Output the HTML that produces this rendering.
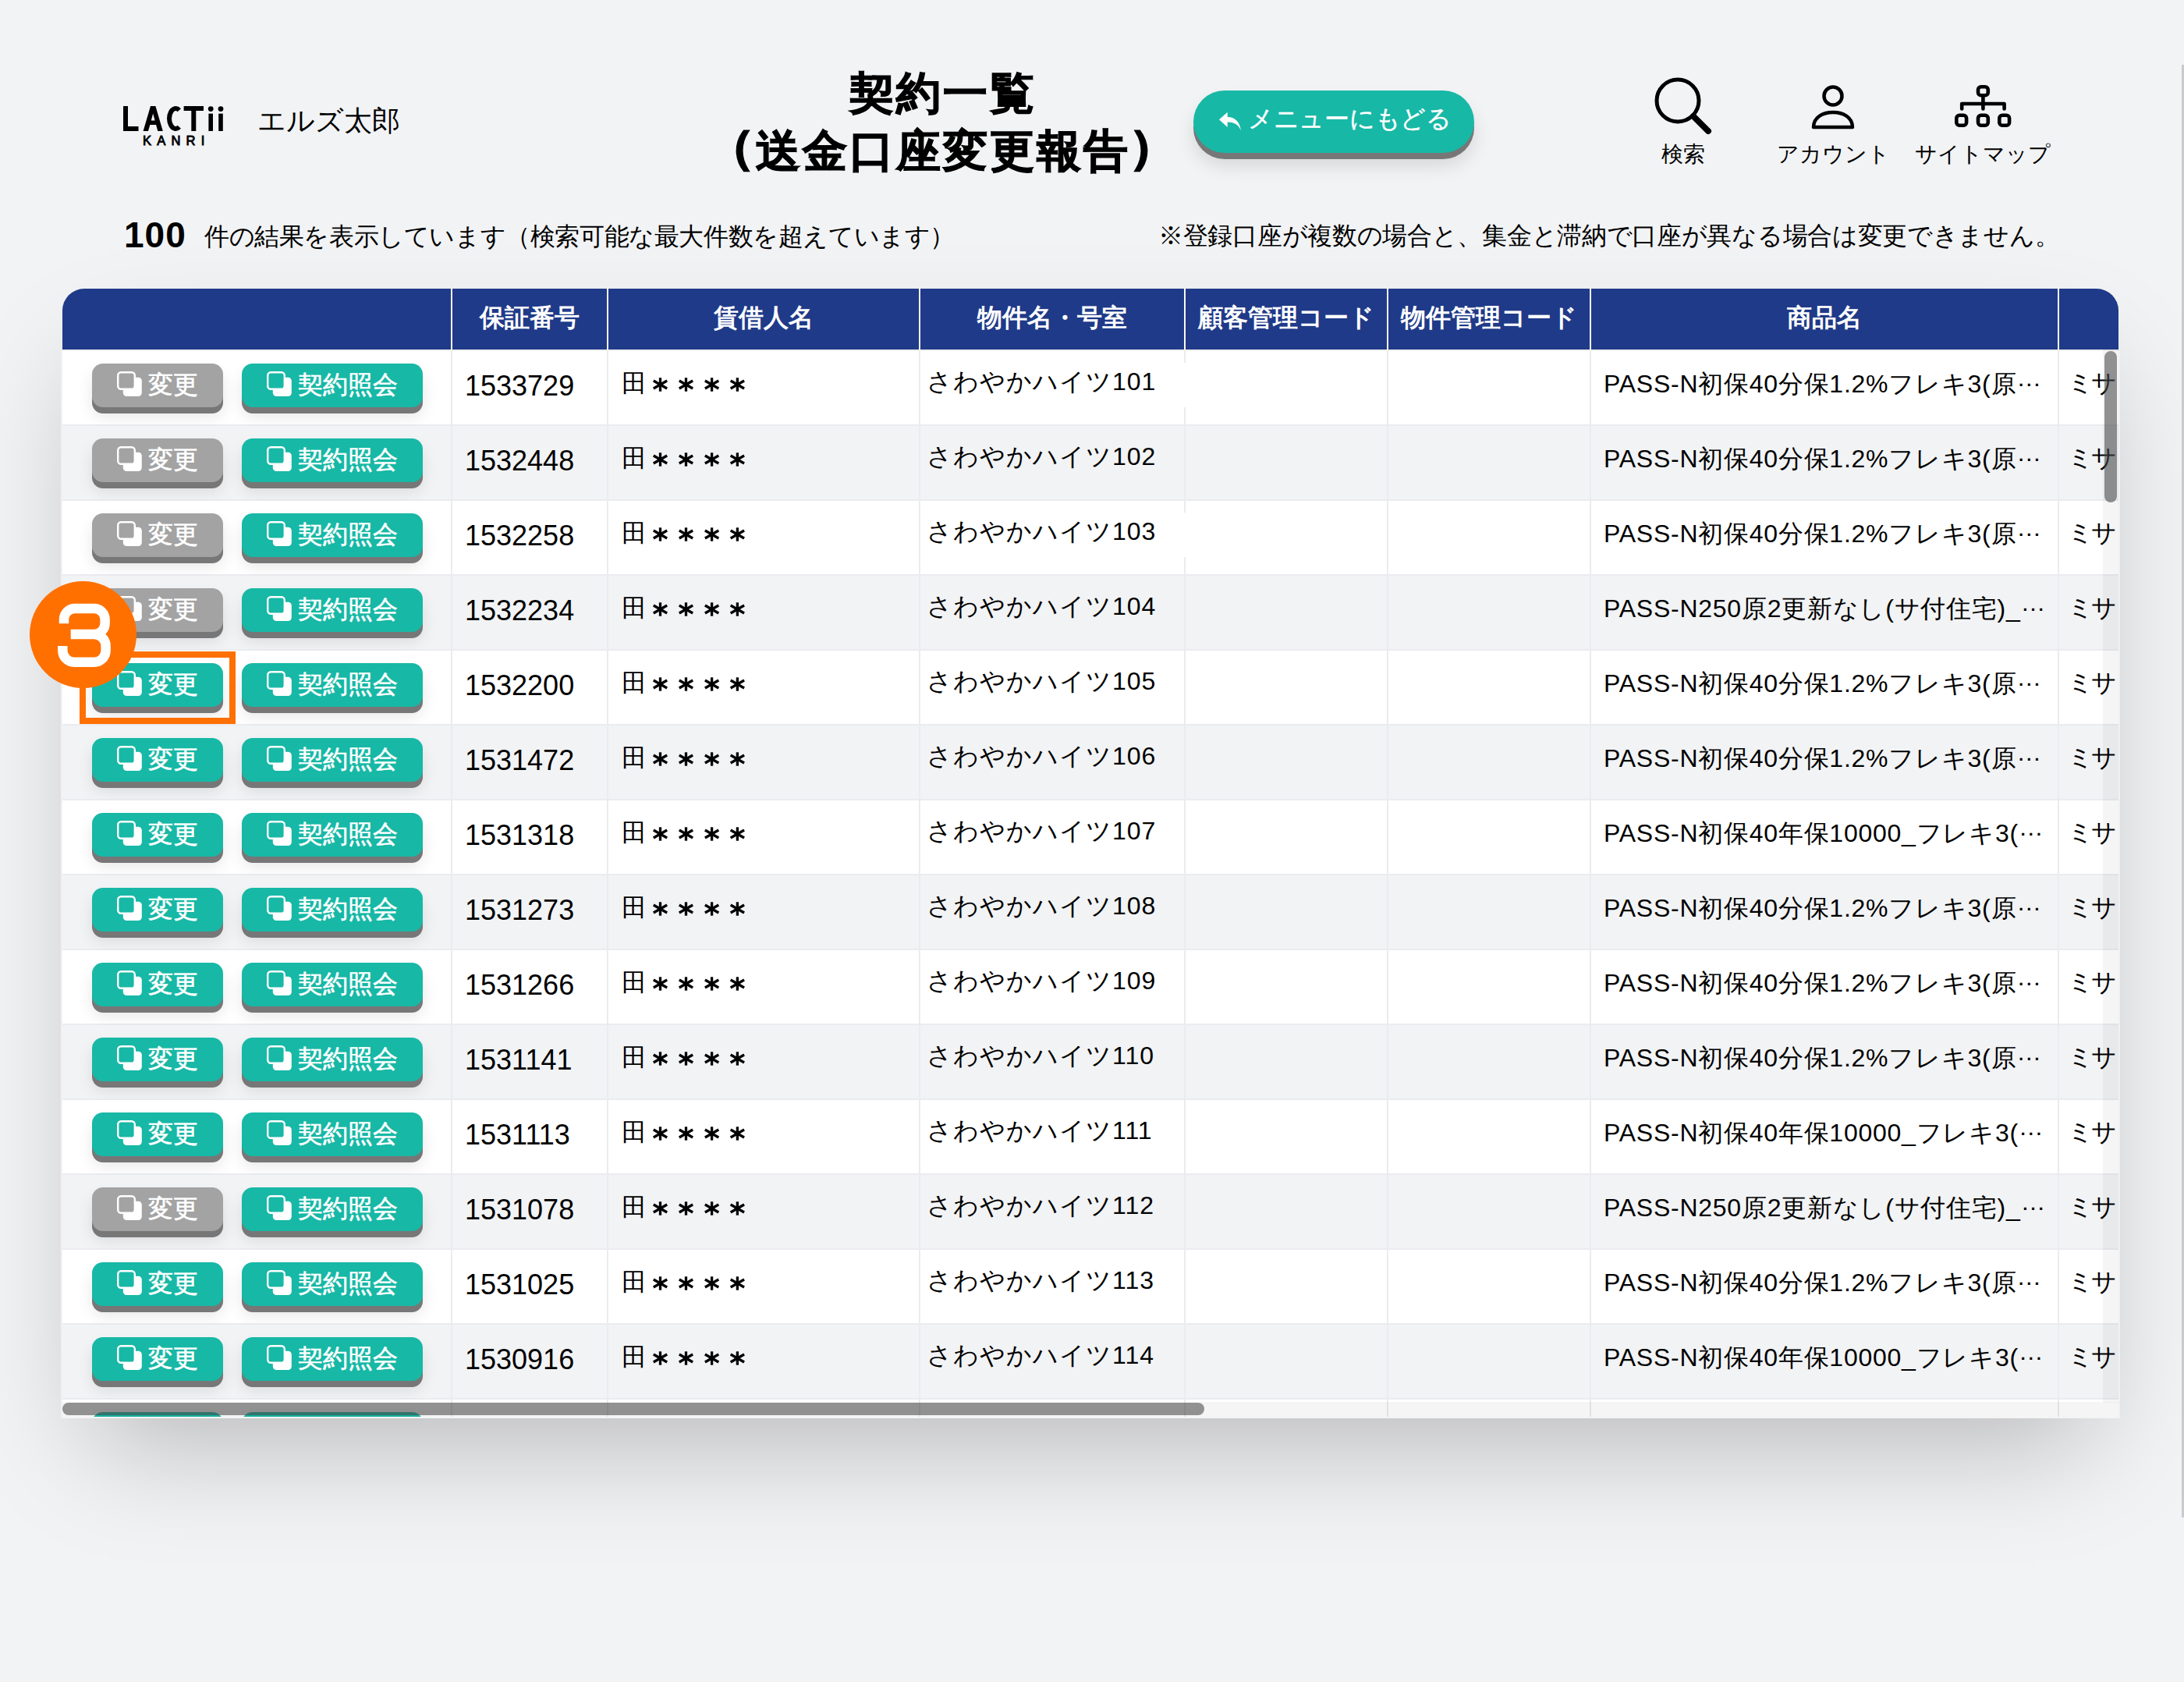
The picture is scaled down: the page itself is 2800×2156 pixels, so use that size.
<!DOCTYPE html>
<html><head><meta charset="utf-8">
<style>
html,body{margin:0;padding:0}
body{width:2800px;height:2156px;overflow:hidden;position:relative;background:#f2f3f5;font-family:"Liberation Sans",sans-serif;color:#000}
.abs{position:absolute;white-space:nowrap}
.logo{left:156px;top:124px;font-size:45px;font-weight:bold;letter-spacing:3px;line-height:52px}
.kanri{left:183px;top:170.5px;font-size:16.5px;font-weight:normal;-webkit-text-stroke:0.9px #000;letter-spacing:7.2px;line-height:18px}
.user{left:330px;top:133px;font-size:36px;line-height:44px}
.title{left:900px;width:617px;top:82px;text-align:center;font-size:57px;font-weight:bold;line-height:74px;letter-spacing:3px;-webkit-text-stroke:1.2px #000}
.title b{-webkit-text-stroke:3px #000;position:relative;top:-5px}
.menu{left:1530px;top:116px;width:360px;height:80px;border-radius:40px;background:#17b8a6;box-shadow:0 8px 0 #777,0 16px 24px rgba(0,0,0,.12)}
.menu span{position:absolute;left:70px;top:16px;font-size:32px;line-height:40px;color:#fff;letter-spacing:-0.3px;-webkit-text-stroke:0.4px #fff}
.menu svg{position:absolute;left:33px;top:27px}
.nav{top:180px;font-size:28px;line-height:36px;text-align:center;width:200px}
.count{left:159px;top:275px;font-size:46px;font-weight:bold;line-height:52px;letter-spacing:1px}
.countt{left:262px;top:283px;font-size:32px;line-height:40px;letter-spacing:-0.4px}
.note{left:1485px;top:282px;font-size:32px;line-height:40px;letter-spacing:-0.3px}
.tbl{left:80px;top:370px;width:2636px;height:1448px;border-radius:28px 28px 0 0;overflow:hidden;background:#f4f4f4;box-shadow:0 66px 140px -37px rgba(0,0,0,.25)}
.hd{position:absolute;left:0;top:0;width:2636px;height:78px;background:#1f3a88}
.hd .dv{position:absolute;top:0;width:2px;height:78px;background:#faf8f2}
.hl{position:absolute;left:0;top:78px;width:2636px;height:2px;background:#efefef}
.hd .h{position:absolute;top:17px;height:40px;line-height:40px;font-size:32px;font-weight:bold;color:#fff;text-align:center}
.row{position:absolute;left:0;width:2636px;height:96px;border-bottom:2px solid #ebecef;box-sizing:border-box}
.row .vd{position:absolute;top:0;width:2px;height:96px;background:#ebecef}
.btn{position:absolute;top:16px;height:56px;border-radius:14px;box-shadow:0 8px 0 #777,0 12px 20px rgba(0,0,0,.10)}
.btn.t{background:#17b8a6}
.btn.g{background:#a3a3a3}
.btn.b1{left:38px;width:168px}
.btn.b2{left:230px;width:232px}
.btn.b2{background:#17b8a6}
.btn .ic{position:absolute;left:32px;top:10px}
.btn span{position:absolute;left:72px;top:7px;font-size:32px;line-height:40px;font-weight:normal;-webkit-text-stroke:0.6px #fff;color:#fff}
.c{position:absolute;top:26px;line-height:40px;font-size:32px;white-space:nowrap}
.num{left:516px;font-size:36px;top:25px}
.nm{left:717px;top:21px}
.bk{left:1108px;top:19px;letter-spacing:1px}
.pr{left:1976px;font-size:32px;top:22px;letter-spacing:0.75px}
.pr i{font-style:normal;position:relative;top:-8px}
.ms{left:2571px;top:21px;letter-spacing:-3px}
.ast{position:absolute;left:756px;top:31px}
.vtrack{position:absolute;left:2616px;top:78px;width:20px;height:1350px;background:rgba(0,0,0,.04)}
.vthumb{position:absolute;left:2618px;top:80px;width:16px;height:194px;border-radius:8px;background:rgba(72,72,72,.58)}
.htrack{position:absolute;left:0;top:1427px;width:2636px;height:21px;background:rgba(0,0,0,.04)}
.hthumb{position:absolute;left:0;top:1428px;width:1464px;height:16px;border-radius:8px;background:rgba(72,72,72,.58)}
.pline{left:2797px;top:83px;width:3px;height:1862px;background:#c9cacd}
.badge{left:38px;top:745px;width:137px;height:137px;border-radius:50%;background:#ff7000}
.rect{left:102px;top:835px;width:184px;height:77px;border:8px solid #ff7000}
</style></head><body>
<svg class="abs" style="left:150px;top:128px" width="150" height="48" viewBox="150 128 150 48">
<path d="M158 136 H164 V162 H177.5 V168 H158 Z"/>
<path fill-rule="evenodd" d="M183.6 168 L193 136 H199.4 L208.8 168 H202.3 L200.1 160 H192.3 L190 168 Z M193.8 154.5 H198.6 L196.2 145.5 Z"/>
<path d="M229.8 141.2 A8.2 13 0 1 0 229.8 162.8" fill="none" stroke="#000" stroke-width="6"/>
<path d="M235.6 136 H261 V142 H251.3 V168 H245.3 V142 H235.6 Z"/>
<rect x="267.4" y="145.6" width="5.6" height="22.4"/><rect x="280.2" y="145.6" width="5.6" height="22.4"/>
<circle cx="270.2" cy="139.6" r="3.4"/><circle cx="283" cy="139.6" r="3.4"/>
</svg>
<div class="abs kanri">KANRI</div>
<div class="abs user">エルズ太郎</div>
<div class="abs title">契約一覧<br><b>（</b>送金口座変更報告<b>）</b></div>
<div class="abs menu"><svg width="30" height="27" viewBox="0 0 28 24"><path d="M10 0 L0 9 L10 18 L10 12 C18 12 23 15 26 22 C25 13 20 6 10 6 Z" fill="#fff"/></svg><span>メニューにもどる</span></div>
<svg class="abs" style="left:2118px;top:96px" width="80" height="80" viewBox="0 0 80 80"><circle cx="33" cy="33" r="27" fill="none" stroke="#000" stroke-width="5"/><line x1="53" y1="53" x2="72" y2="72" stroke="#000" stroke-width="8" stroke-linecap="round"/></svg>
<svg class="abs" style="left:2318px;top:106px" width="64" height="64" viewBox="0 0 64 64"><circle cx="32" cy="17" r="11.5" fill="none" stroke="#000" stroke-width="4.5"/><path d="M7 57 C7 45 18 38 32 38 C46 38 57 45 57 57 Z" fill="none" stroke="#000" stroke-width="4.5" stroke-linejoin="round"/></svg>
<svg class="abs" style="left:2500px;top:104px" width="84" height="64" viewBox="2500 104 84 64"><g fill="none" stroke="#000" stroke-width="4.6"><rect x="2536" y="111.3" width="12.8" height="11" rx="3.8"/><path d="M2515.2 139.5 V133 H2569.6 V139.5 M2542.4 123 V139.5" stroke-linecap="round" stroke-linejoin="round"/><rect x="2508.3" y="147.7" width="12.8" height="13" rx="3.8"/><rect x="2536" y="147.7" width="12.8" height="13" rx="3.8"/><rect x="2563.3" y="147.7" width="12.8" height="13" rx="3.8"/></g></svg>
<div class="abs nav" style="left:2058px">検索</div>
<div class="abs nav" style="left:2250px">アカウント</div>
<div class="abs nav" style="left:2442px">サイトマップ</div>
<div class="abs count">100</div>
<div class="abs countt">件の結果を表示しています（検索可能な最大件数を超えています）</div>
<div class="abs note">※登録口座が複数の場合と、集金と滞納で口座が異なる場合は変更できません。</div>
<div class="abs tbl">
<div class="row" style="top:80px;background:#ffffff"><div class="btn b1 g"><svg class="ic" width="40" height="40" viewBox="0 0 40 40"><rect x="7.8" y="7.8" width="24" height="24.2" rx="4.5" fill="#fff"/><rect x="1.2" y="1.2" width="21.6" height="21.6" rx="4" fill="#a3a3a3" stroke="#fff" stroke-width="2.4"/></svg><span>変更</span></div><div class="btn b2 t"><svg class="ic" width="40" height="40" viewBox="0 0 40 40"><rect x="7.8" y="7.8" width="24" height="24.2" rx="4.5" fill="#fff"/><rect x="1.2" y="1.2" width="21.6" height="21.6" rx="4" fill="#17b8a6" stroke="#fff" stroke-width="2.4"/></svg><span>契約照会</span></div><div class="vd" style="left:498px"></div><div class="vd" style="left:698px"></div><div class="vd" style="left:1098px"></div><div class="vd" style="left:1438px"></div><div class="vd" style="left:1698px"></div><div class="vd" style="left:1958px"></div><div class="vd" style="left:2558px"></div><div class="c num">1533729</div><div class="c nm">田</div><svg class="ast" width="130" height="24" viewBox="0 0 130 24"><g transform="translate(10.5,12)" stroke="#000" stroke-width="3.3"><line x1="0" y1="-8.7" x2="0" y2="8.7"/><line x1="-8.7" y1="-5" x2="8.7" y2="5"/><line x1="-8.7" y1="5" x2="8.7" y2="-5"/></g><g transform="translate(43.5,12)" stroke="#000" stroke-width="3.3"><line x1="0" y1="-8.7" x2="0" y2="8.7"/><line x1="-8.7" y1="-5" x2="8.7" y2="5"/><line x1="-8.7" y1="5" x2="8.7" y2="-5"/></g><g transform="translate(76.6,12)" stroke="#000" stroke-width="3.3"><line x1="0" y1="-8.7" x2="0" y2="8.7"/><line x1="-8.7" y1="-5" x2="8.7" y2="5"/><line x1="-8.7" y1="5" x2="8.7" y2="-5"/></g><g transform="translate(109.4,12)" stroke="#000" stroke-width="3.3"><line x1="0" y1="-8.7" x2="0" y2="8.7"/><line x1="-8.7" y1="-5" x2="8.7" y2="5"/><line x1="-8.7" y1="5" x2="8.7" y2="-5"/></g></svg><div class="c bk">さわやかハイツ101</div><div class="c pr">PASS-N初保40分保1.2%フレキ3(原<i>…</i></div><div class="c ms">ミサ</div><div style="position:absolute;left:1438px;top:15px;width:2px;height:57px;background:#fff"></div></div><div class="row" style="top:176px;background:#f2f3f5"><div class="btn b1 g"><svg class="ic" width="40" height="40" viewBox="0 0 40 40"><rect x="7.8" y="7.8" width="24" height="24.2" rx="4.5" fill="#fff"/><rect x="1.2" y="1.2" width="21.6" height="21.6" rx="4" fill="#a3a3a3" stroke="#fff" stroke-width="2.4"/></svg><span>変更</span></div><div class="btn b2 t"><svg class="ic" width="40" height="40" viewBox="0 0 40 40"><rect x="7.8" y="7.8" width="24" height="24.2" rx="4.5" fill="#fff"/><rect x="1.2" y="1.2" width="21.6" height="21.6" rx="4" fill="#17b8a6" stroke="#fff" stroke-width="2.4"/></svg><span>契約照会</span></div><div class="vd" style="left:498px"></div><div class="vd" style="left:698px"></div><div class="vd" style="left:1098px"></div><div class="vd" style="left:1438px"></div><div class="vd" style="left:1698px"></div><div class="vd" style="left:1958px"></div><div class="vd" style="left:2558px"></div><div class="c num">1532448</div><div class="c nm">田</div><svg class="ast" width="130" height="24" viewBox="0 0 130 24"><g transform="translate(10.5,12)" stroke="#000" stroke-width="3.3"><line x1="0" y1="-8.7" x2="0" y2="8.7"/><line x1="-8.7" y1="-5" x2="8.7" y2="5"/><line x1="-8.7" y1="5" x2="8.7" y2="-5"/></g><g transform="translate(43.5,12)" stroke="#000" stroke-width="3.3"><line x1="0" y1="-8.7" x2="0" y2="8.7"/><line x1="-8.7" y1="-5" x2="8.7" y2="5"/><line x1="-8.7" y1="5" x2="8.7" y2="-5"/></g><g transform="translate(76.6,12)" stroke="#000" stroke-width="3.3"><line x1="0" y1="-8.7" x2="0" y2="8.7"/><line x1="-8.7" y1="-5" x2="8.7" y2="5"/><line x1="-8.7" y1="5" x2="8.7" y2="-5"/></g><g transform="translate(109.4,12)" stroke="#000" stroke-width="3.3"><line x1="0" y1="-8.7" x2="0" y2="8.7"/><line x1="-8.7" y1="-5" x2="8.7" y2="5"/><line x1="-8.7" y1="5" x2="8.7" y2="-5"/></g></svg><div class="c bk">さわやかハイツ102</div><div class="c pr">PASS-N初保40分保1.2%フレキ3(原<i>…</i></div><div class="c ms">ミサ</div></div><div class="row" style="top:272px;background:#ffffff"><div class="btn b1 g"><svg class="ic" width="40" height="40" viewBox="0 0 40 40"><rect x="7.8" y="7.8" width="24" height="24.2" rx="4.5" fill="#fff"/><rect x="1.2" y="1.2" width="21.6" height="21.6" rx="4" fill="#a3a3a3" stroke="#fff" stroke-width="2.4"/></svg><span>変更</span></div><div class="btn b2 t"><svg class="ic" width="40" height="40" viewBox="0 0 40 40"><rect x="7.8" y="7.8" width="24" height="24.2" rx="4.5" fill="#fff"/><rect x="1.2" y="1.2" width="21.6" height="21.6" rx="4" fill="#17b8a6" stroke="#fff" stroke-width="2.4"/></svg><span>契約照会</span></div><div class="vd" style="left:498px"></div><div class="vd" style="left:698px"></div><div class="vd" style="left:1098px"></div><div class="vd" style="left:1438px"></div><div class="vd" style="left:1698px"></div><div class="vd" style="left:1958px"></div><div class="vd" style="left:2558px"></div><div class="c num">1532258</div><div class="c nm">田</div><svg class="ast" width="130" height="24" viewBox="0 0 130 24"><g transform="translate(10.5,12)" stroke="#000" stroke-width="3.3"><line x1="0" y1="-8.7" x2="0" y2="8.7"/><line x1="-8.7" y1="-5" x2="8.7" y2="5"/><line x1="-8.7" y1="5" x2="8.7" y2="-5"/></g><g transform="translate(43.5,12)" stroke="#000" stroke-width="3.3"><line x1="0" y1="-8.7" x2="0" y2="8.7"/><line x1="-8.7" y1="-5" x2="8.7" y2="5"/><line x1="-8.7" y1="5" x2="8.7" y2="-5"/></g><g transform="translate(76.6,12)" stroke="#000" stroke-width="3.3"><line x1="0" y1="-8.7" x2="0" y2="8.7"/><line x1="-8.7" y1="-5" x2="8.7" y2="5"/><line x1="-8.7" y1="5" x2="8.7" y2="-5"/></g><g transform="translate(109.4,12)" stroke="#000" stroke-width="3.3"><line x1="0" y1="-8.7" x2="0" y2="8.7"/><line x1="-8.7" y1="-5" x2="8.7" y2="5"/><line x1="-8.7" y1="5" x2="8.7" y2="-5"/></g></svg><div class="c bk">さわやかハイツ103</div><div class="c pr">PASS-N初保40分保1.2%フレキ3(原<i>…</i></div><div class="c ms">ミサ</div><div style="position:absolute;left:1438px;top:15px;width:2px;height:57px;background:#fff"></div></div><div class="row" style="top:368px;background:#f2f3f5"><div class="btn b1 g"><svg class="ic" width="40" height="40" viewBox="0 0 40 40"><rect x="7.8" y="7.8" width="24" height="24.2" rx="4.5" fill="#fff"/><rect x="1.2" y="1.2" width="21.6" height="21.6" rx="4" fill="#a3a3a3" stroke="#fff" stroke-width="2.4"/></svg><span>変更</span></div><div class="btn b2 t"><svg class="ic" width="40" height="40" viewBox="0 0 40 40"><rect x="7.8" y="7.8" width="24" height="24.2" rx="4.5" fill="#fff"/><rect x="1.2" y="1.2" width="21.6" height="21.6" rx="4" fill="#17b8a6" stroke="#fff" stroke-width="2.4"/></svg><span>契約照会</span></div><div class="vd" style="left:498px"></div><div class="vd" style="left:698px"></div><div class="vd" style="left:1098px"></div><div class="vd" style="left:1438px"></div><div class="vd" style="left:1698px"></div><div class="vd" style="left:1958px"></div><div class="vd" style="left:2558px"></div><div class="c num">1532234</div><div class="c nm">田</div><svg class="ast" width="130" height="24" viewBox="0 0 130 24"><g transform="translate(10.5,12)" stroke="#000" stroke-width="3.3"><line x1="0" y1="-8.7" x2="0" y2="8.7"/><line x1="-8.7" y1="-5" x2="8.7" y2="5"/><line x1="-8.7" y1="5" x2="8.7" y2="-5"/></g><g transform="translate(43.5,12)" stroke="#000" stroke-width="3.3"><line x1="0" y1="-8.7" x2="0" y2="8.7"/><line x1="-8.7" y1="-5" x2="8.7" y2="5"/><line x1="-8.7" y1="5" x2="8.7" y2="-5"/></g><g transform="translate(76.6,12)" stroke="#000" stroke-width="3.3"><line x1="0" y1="-8.7" x2="0" y2="8.7"/><line x1="-8.7" y1="-5" x2="8.7" y2="5"/><line x1="-8.7" y1="5" x2="8.7" y2="-5"/></g><g transform="translate(109.4,12)" stroke="#000" stroke-width="3.3"><line x1="0" y1="-8.7" x2="0" y2="8.7"/><line x1="-8.7" y1="-5" x2="8.7" y2="5"/><line x1="-8.7" y1="5" x2="8.7" y2="-5"/></g></svg><div class="c bk">さわやかハイツ104</div><div class="c pr">PASS-N250原2更新なし(サ付住宅)_<i>…</i></div><div class="c ms">ミサ</div></div><div class="row" style="top:464px;background:#ffffff"><div class="btn b1 t"><svg class="ic" width="40" height="40" viewBox="0 0 40 40"><rect x="7.8" y="7.8" width="24" height="24.2" rx="4.5" fill="#fff"/><rect x="1.2" y="1.2" width="21.6" height="21.6" rx="4" fill="#17b8a6" stroke="#fff" stroke-width="2.4"/></svg><span>変更</span></div><div class="btn b2 t"><svg class="ic" width="40" height="40" viewBox="0 0 40 40"><rect x="7.8" y="7.8" width="24" height="24.2" rx="4.5" fill="#fff"/><rect x="1.2" y="1.2" width="21.6" height="21.6" rx="4" fill="#17b8a6" stroke="#fff" stroke-width="2.4"/></svg><span>契約照会</span></div><div class="vd" style="left:498px"></div><div class="vd" style="left:698px"></div><div class="vd" style="left:1098px"></div><div class="vd" style="left:1438px"></div><div class="vd" style="left:1698px"></div><div class="vd" style="left:1958px"></div><div class="vd" style="left:2558px"></div><div class="c num">1532200</div><div class="c nm">田</div><svg class="ast" width="130" height="24" viewBox="0 0 130 24"><g transform="translate(10.5,12)" stroke="#000" stroke-width="3.3"><line x1="0" y1="-8.7" x2="0" y2="8.7"/><line x1="-8.7" y1="-5" x2="8.7" y2="5"/><line x1="-8.7" y1="5" x2="8.7" y2="-5"/></g><g transform="translate(43.5,12)" stroke="#000" stroke-width="3.3"><line x1="0" y1="-8.7" x2="0" y2="8.7"/><line x1="-8.7" y1="-5" x2="8.7" y2="5"/><line x1="-8.7" y1="5" x2="8.7" y2="-5"/></g><g transform="translate(76.6,12)" stroke="#000" stroke-width="3.3"><line x1="0" y1="-8.7" x2="0" y2="8.7"/><line x1="-8.7" y1="-5" x2="8.7" y2="5"/><line x1="-8.7" y1="5" x2="8.7" y2="-5"/></g><g transform="translate(109.4,12)" stroke="#000" stroke-width="3.3"><line x1="0" y1="-8.7" x2="0" y2="8.7"/><line x1="-8.7" y1="-5" x2="8.7" y2="5"/><line x1="-8.7" y1="5" x2="8.7" y2="-5"/></g></svg><div class="c bk">さわやかハイツ105</div><div class="c pr">PASS-N初保40分保1.2%フレキ3(原<i>…</i></div><div class="c ms">ミサ</div></div><div class="row" style="top:560px;background:#f2f3f5"><div class="btn b1 t"><svg class="ic" width="40" height="40" viewBox="0 0 40 40"><rect x="7.8" y="7.8" width="24" height="24.2" rx="4.5" fill="#fff"/><rect x="1.2" y="1.2" width="21.6" height="21.6" rx="4" fill="#17b8a6" stroke="#fff" stroke-width="2.4"/></svg><span>変更</span></div><div class="btn b2 t"><svg class="ic" width="40" height="40" viewBox="0 0 40 40"><rect x="7.8" y="7.8" width="24" height="24.2" rx="4.5" fill="#fff"/><rect x="1.2" y="1.2" width="21.6" height="21.6" rx="4" fill="#17b8a6" stroke="#fff" stroke-width="2.4"/></svg><span>契約照会</span></div><div class="vd" style="left:498px"></div><div class="vd" style="left:698px"></div><div class="vd" style="left:1098px"></div><div class="vd" style="left:1438px"></div><div class="vd" style="left:1698px"></div><div class="vd" style="left:1958px"></div><div class="vd" style="left:2558px"></div><div class="c num">1531472</div><div class="c nm">田</div><svg class="ast" width="130" height="24" viewBox="0 0 130 24"><g transform="translate(10.5,12)" stroke="#000" stroke-width="3.3"><line x1="0" y1="-8.7" x2="0" y2="8.7"/><line x1="-8.7" y1="-5" x2="8.7" y2="5"/><line x1="-8.7" y1="5" x2="8.7" y2="-5"/></g><g transform="translate(43.5,12)" stroke="#000" stroke-width="3.3"><line x1="0" y1="-8.7" x2="0" y2="8.7"/><line x1="-8.7" y1="-5" x2="8.7" y2="5"/><line x1="-8.7" y1="5" x2="8.7" y2="-5"/></g><g transform="translate(76.6,12)" stroke="#000" stroke-width="3.3"><line x1="0" y1="-8.7" x2="0" y2="8.7"/><line x1="-8.7" y1="-5" x2="8.7" y2="5"/><line x1="-8.7" y1="5" x2="8.7" y2="-5"/></g><g transform="translate(109.4,12)" stroke="#000" stroke-width="3.3"><line x1="0" y1="-8.7" x2="0" y2="8.7"/><line x1="-8.7" y1="-5" x2="8.7" y2="5"/><line x1="-8.7" y1="5" x2="8.7" y2="-5"/></g></svg><div class="c bk">さわやかハイツ106</div><div class="c pr">PASS-N初保40分保1.2%フレキ3(原<i>…</i></div><div class="c ms">ミサ</div></div><div class="row" style="top:656px;background:#ffffff"><div class="btn b1 t"><svg class="ic" width="40" height="40" viewBox="0 0 40 40"><rect x="7.8" y="7.8" width="24" height="24.2" rx="4.5" fill="#fff"/><rect x="1.2" y="1.2" width="21.6" height="21.6" rx="4" fill="#17b8a6" stroke="#fff" stroke-width="2.4"/></svg><span>変更</span></div><div class="btn b2 t"><svg class="ic" width="40" height="40" viewBox="0 0 40 40"><rect x="7.8" y="7.8" width="24" height="24.2" rx="4.5" fill="#fff"/><rect x="1.2" y="1.2" width="21.6" height="21.6" rx="4" fill="#17b8a6" stroke="#fff" stroke-width="2.4"/></svg><span>契約照会</span></div><div class="vd" style="left:498px"></div><div class="vd" style="left:698px"></div><div class="vd" style="left:1098px"></div><div class="vd" style="left:1438px"></div><div class="vd" style="left:1698px"></div><div class="vd" style="left:1958px"></div><div class="vd" style="left:2558px"></div><div class="c num">1531318</div><div class="c nm">田</div><svg class="ast" width="130" height="24" viewBox="0 0 130 24"><g transform="translate(10.5,12)" stroke="#000" stroke-width="3.3"><line x1="0" y1="-8.7" x2="0" y2="8.7"/><line x1="-8.7" y1="-5" x2="8.7" y2="5"/><line x1="-8.7" y1="5" x2="8.7" y2="-5"/></g><g transform="translate(43.5,12)" stroke="#000" stroke-width="3.3"><line x1="0" y1="-8.7" x2="0" y2="8.7"/><line x1="-8.7" y1="-5" x2="8.7" y2="5"/><line x1="-8.7" y1="5" x2="8.7" y2="-5"/></g><g transform="translate(76.6,12)" stroke="#000" stroke-width="3.3"><line x1="0" y1="-8.7" x2="0" y2="8.7"/><line x1="-8.7" y1="-5" x2="8.7" y2="5"/><line x1="-8.7" y1="5" x2="8.7" y2="-5"/></g><g transform="translate(109.4,12)" stroke="#000" stroke-width="3.3"><line x1="0" y1="-8.7" x2="0" y2="8.7"/><line x1="-8.7" y1="-5" x2="8.7" y2="5"/><line x1="-8.7" y1="5" x2="8.7" y2="-5"/></g></svg><div class="c bk">さわやかハイツ107</div><div class="c pr">PASS-N初保40年保10000_フレキ3(<i>…</i></div><div class="c ms">ミサ</div></div><div class="row" style="top:752px;background:#f2f3f5"><div class="btn b1 t"><svg class="ic" width="40" height="40" viewBox="0 0 40 40"><rect x="7.8" y="7.8" width="24" height="24.2" rx="4.5" fill="#fff"/><rect x="1.2" y="1.2" width="21.6" height="21.6" rx="4" fill="#17b8a6" stroke="#fff" stroke-width="2.4"/></svg><span>変更</span></div><div class="btn b2 t"><svg class="ic" width="40" height="40" viewBox="0 0 40 40"><rect x="7.8" y="7.8" width="24" height="24.2" rx="4.5" fill="#fff"/><rect x="1.2" y="1.2" width="21.6" height="21.6" rx="4" fill="#17b8a6" stroke="#fff" stroke-width="2.4"/></svg><span>契約照会</span></div><div class="vd" style="left:498px"></div><div class="vd" style="left:698px"></div><div class="vd" style="left:1098px"></div><div class="vd" style="left:1438px"></div><div class="vd" style="left:1698px"></div><div class="vd" style="left:1958px"></div><div class="vd" style="left:2558px"></div><div class="c num">1531273</div><div class="c nm">田</div><svg class="ast" width="130" height="24" viewBox="0 0 130 24"><g transform="translate(10.5,12)" stroke="#000" stroke-width="3.3"><line x1="0" y1="-8.7" x2="0" y2="8.7"/><line x1="-8.7" y1="-5" x2="8.7" y2="5"/><line x1="-8.7" y1="5" x2="8.7" y2="-5"/></g><g transform="translate(43.5,12)" stroke="#000" stroke-width="3.3"><line x1="0" y1="-8.7" x2="0" y2="8.7"/><line x1="-8.7" y1="-5" x2="8.7" y2="5"/><line x1="-8.7" y1="5" x2="8.7" y2="-5"/></g><g transform="translate(76.6,12)" stroke="#000" stroke-width="3.3"><line x1="0" y1="-8.7" x2="0" y2="8.7"/><line x1="-8.7" y1="-5" x2="8.7" y2="5"/><line x1="-8.7" y1="5" x2="8.7" y2="-5"/></g><g transform="translate(109.4,12)" stroke="#000" stroke-width="3.3"><line x1="0" y1="-8.7" x2="0" y2="8.7"/><line x1="-8.7" y1="-5" x2="8.7" y2="5"/><line x1="-8.7" y1="5" x2="8.7" y2="-5"/></g></svg><div class="c bk">さわやかハイツ108</div><div class="c pr">PASS-N初保40分保1.2%フレキ3(原<i>…</i></div><div class="c ms">ミサ</div></div><div class="row" style="top:848px;background:#ffffff"><div class="btn b1 t"><svg class="ic" width="40" height="40" viewBox="0 0 40 40"><rect x="7.8" y="7.8" width="24" height="24.2" rx="4.5" fill="#fff"/><rect x="1.2" y="1.2" width="21.6" height="21.6" rx="4" fill="#17b8a6" stroke="#fff" stroke-width="2.4"/></svg><span>変更</span></div><div class="btn b2 t"><svg class="ic" width="40" height="40" viewBox="0 0 40 40"><rect x="7.8" y="7.8" width="24" height="24.2" rx="4.5" fill="#fff"/><rect x="1.2" y="1.2" width="21.6" height="21.6" rx="4" fill="#17b8a6" stroke="#fff" stroke-width="2.4"/></svg><span>契約照会</span></div><div class="vd" style="left:498px"></div><div class="vd" style="left:698px"></div><div class="vd" style="left:1098px"></div><div class="vd" style="left:1438px"></div><div class="vd" style="left:1698px"></div><div class="vd" style="left:1958px"></div><div class="vd" style="left:2558px"></div><div class="c num">1531266</div><div class="c nm">田</div><svg class="ast" width="130" height="24" viewBox="0 0 130 24"><g transform="translate(10.5,12)" stroke="#000" stroke-width="3.3"><line x1="0" y1="-8.7" x2="0" y2="8.7"/><line x1="-8.7" y1="-5" x2="8.7" y2="5"/><line x1="-8.7" y1="5" x2="8.7" y2="-5"/></g><g transform="translate(43.5,12)" stroke="#000" stroke-width="3.3"><line x1="0" y1="-8.7" x2="0" y2="8.7"/><line x1="-8.7" y1="-5" x2="8.7" y2="5"/><line x1="-8.7" y1="5" x2="8.7" y2="-5"/></g><g transform="translate(76.6,12)" stroke="#000" stroke-width="3.3"><line x1="0" y1="-8.7" x2="0" y2="8.7"/><line x1="-8.7" y1="-5" x2="8.7" y2="5"/><line x1="-8.7" y1="5" x2="8.7" y2="-5"/></g><g transform="translate(109.4,12)" stroke="#000" stroke-width="3.3"><line x1="0" y1="-8.7" x2="0" y2="8.7"/><line x1="-8.7" y1="-5" x2="8.7" y2="5"/><line x1="-8.7" y1="5" x2="8.7" y2="-5"/></g></svg><div class="c bk">さわやかハイツ109</div><div class="c pr">PASS-N初保40分保1.2%フレキ3(原<i>…</i></div><div class="c ms">ミサ</div></div><div class="row" style="top:944px;background:#f2f3f5"><div class="btn b1 t"><svg class="ic" width="40" height="40" viewBox="0 0 40 40"><rect x="7.8" y="7.8" width="24" height="24.2" rx="4.5" fill="#fff"/><rect x="1.2" y="1.2" width="21.6" height="21.6" rx="4" fill="#17b8a6" stroke="#fff" stroke-width="2.4"/></svg><span>変更</span></div><div class="btn b2 t"><svg class="ic" width="40" height="40" viewBox="0 0 40 40"><rect x="7.8" y="7.8" width="24" height="24.2" rx="4.5" fill="#fff"/><rect x="1.2" y="1.2" width="21.6" height="21.6" rx="4" fill="#17b8a6" stroke="#fff" stroke-width="2.4"/></svg><span>契約照会</span></div><div class="vd" style="left:498px"></div><div class="vd" style="left:698px"></div><div class="vd" style="left:1098px"></div><div class="vd" style="left:1438px"></div><div class="vd" style="left:1698px"></div><div class="vd" style="left:1958px"></div><div class="vd" style="left:2558px"></div><div class="c num">1531141</div><div class="c nm">田</div><svg class="ast" width="130" height="24" viewBox="0 0 130 24"><g transform="translate(10.5,12)" stroke="#000" stroke-width="3.3"><line x1="0" y1="-8.7" x2="0" y2="8.7"/><line x1="-8.7" y1="-5" x2="8.7" y2="5"/><line x1="-8.7" y1="5" x2="8.7" y2="-5"/></g><g transform="translate(43.5,12)" stroke="#000" stroke-width="3.3"><line x1="0" y1="-8.7" x2="0" y2="8.7"/><line x1="-8.7" y1="-5" x2="8.7" y2="5"/><line x1="-8.7" y1="5" x2="8.7" y2="-5"/></g><g transform="translate(76.6,12)" stroke="#000" stroke-width="3.3"><line x1="0" y1="-8.7" x2="0" y2="8.7"/><line x1="-8.7" y1="-5" x2="8.7" y2="5"/><line x1="-8.7" y1="5" x2="8.7" y2="-5"/></g><g transform="translate(109.4,12)" stroke="#000" stroke-width="3.3"><line x1="0" y1="-8.7" x2="0" y2="8.7"/><line x1="-8.7" y1="-5" x2="8.7" y2="5"/><line x1="-8.7" y1="5" x2="8.7" y2="-5"/></g></svg><div class="c bk">さわやかハイツ110</div><div class="c pr">PASS-N初保40分保1.2%フレキ3(原<i>…</i></div><div class="c ms">ミサ</div></div><div class="row" style="top:1040px;background:#ffffff"><div class="btn b1 t"><svg class="ic" width="40" height="40" viewBox="0 0 40 40"><rect x="7.8" y="7.8" width="24" height="24.2" rx="4.5" fill="#fff"/><rect x="1.2" y="1.2" width="21.6" height="21.6" rx="4" fill="#17b8a6" stroke="#fff" stroke-width="2.4"/></svg><span>変更</span></div><div class="btn b2 t"><svg class="ic" width="40" height="40" viewBox="0 0 40 40"><rect x="7.8" y="7.8" width="24" height="24.2" rx="4.5" fill="#fff"/><rect x="1.2" y="1.2" width="21.6" height="21.6" rx="4" fill="#17b8a6" stroke="#fff" stroke-width="2.4"/></svg><span>契約照会</span></div><div class="vd" style="left:498px"></div><div class="vd" style="left:698px"></div><div class="vd" style="left:1098px"></div><div class="vd" style="left:1438px"></div><div class="vd" style="left:1698px"></div><div class="vd" style="left:1958px"></div><div class="vd" style="left:2558px"></div><div class="c num">1531113</div><div class="c nm">田</div><svg class="ast" width="130" height="24" viewBox="0 0 130 24"><g transform="translate(10.5,12)" stroke="#000" stroke-width="3.3"><line x1="0" y1="-8.7" x2="0" y2="8.7"/><line x1="-8.7" y1="-5" x2="8.7" y2="5"/><line x1="-8.7" y1="5" x2="8.7" y2="-5"/></g><g transform="translate(43.5,12)" stroke="#000" stroke-width="3.3"><line x1="0" y1="-8.7" x2="0" y2="8.7"/><line x1="-8.7" y1="-5" x2="8.7" y2="5"/><line x1="-8.7" y1="5" x2="8.7" y2="-5"/></g><g transform="translate(76.6,12)" stroke="#000" stroke-width="3.3"><line x1="0" y1="-8.7" x2="0" y2="8.7"/><line x1="-8.7" y1="-5" x2="8.7" y2="5"/><line x1="-8.7" y1="5" x2="8.7" y2="-5"/></g><g transform="translate(109.4,12)" stroke="#000" stroke-width="3.3"><line x1="0" y1="-8.7" x2="0" y2="8.7"/><line x1="-8.7" y1="-5" x2="8.7" y2="5"/><line x1="-8.7" y1="5" x2="8.7" y2="-5"/></g></svg><div class="c bk">さわやかハイツ111</div><div class="c pr">PASS-N初保40年保10000_フレキ3(<i>…</i></div><div class="c ms">ミサ</div></div><div class="row" style="top:1136px;background:#f2f3f5"><div class="btn b1 g"><svg class="ic" width="40" height="40" viewBox="0 0 40 40"><rect x="7.8" y="7.8" width="24" height="24.2" rx="4.5" fill="#fff"/><rect x="1.2" y="1.2" width="21.6" height="21.6" rx="4" fill="#a3a3a3" stroke="#fff" stroke-width="2.4"/></svg><span>変更</span></div><div class="btn b2 t"><svg class="ic" width="40" height="40" viewBox="0 0 40 40"><rect x="7.8" y="7.8" width="24" height="24.2" rx="4.5" fill="#fff"/><rect x="1.2" y="1.2" width="21.6" height="21.6" rx="4" fill="#17b8a6" stroke="#fff" stroke-width="2.4"/></svg><span>契約照会</span></div><div class="vd" style="left:498px"></div><div class="vd" style="left:698px"></div><div class="vd" style="left:1098px"></div><div class="vd" style="left:1438px"></div><div class="vd" style="left:1698px"></div><div class="vd" style="left:1958px"></div><div class="vd" style="left:2558px"></div><div class="c num">1531078</div><div class="c nm">田</div><svg class="ast" width="130" height="24" viewBox="0 0 130 24"><g transform="translate(10.5,12)" stroke="#000" stroke-width="3.3"><line x1="0" y1="-8.7" x2="0" y2="8.7"/><line x1="-8.7" y1="-5" x2="8.7" y2="5"/><line x1="-8.7" y1="5" x2="8.7" y2="-5"/></g><g transform="translate(43.5,12)" stroke="#000" stroke-width="3.3"><line x1="0" y1="-8.7" x2="0" y2="8.7"/><line x1="-8.7" y1="-5" x2="8.7" y2="5"/><line x1="-8.7" y1="5" x2="8.7" y2="-5"/></g><g transform="translate(76.6,12)" stroke="#000" stroke-width="3.3"><line x1="0" y1="-8.7" x2="0" y2="8.7"/><line x1="-8.7" y1="-5" x2="8.7" y2="5"/><line x1="-8.7" y1="5" x2="8.7" y2="-5"/></g><g transform="translate(109.4,12)" stroke="#000" stroke-width="3.3"><line x1="0" y1="-8.7" x2="0" y2="8.7"/><line x1="-8.7" y1="-5" x2="8.7" y2="5"/><line x1="-8.7" y1="5" x2="8.7" y2="-5"/></g></svg><div class="c bk">さわやかハイツ112</div><div class="c pr">PASS-N250原2更新なし(サ付住宅)_<i>…</i></div><div class="c ms">ミサ</div></div><div class="row" style="top:1232px;background:#ffffff"><div class="btn b1 t"><svg class="ic" width="40" height="40" viewBox="0 0 40 40"><rect x="7.8" y="7.8" width="24" height="24.2" rx="4.5" fill="#fff"/><rect x="1.2" y="1.2" width="21.6" height="21.6" rx="4" fill="#17b8a6" stroke="#fff" stroke-width="2.4"/></svg><span>変更</span></div><div class="btn b2 t"><svg class="ic" width="40" height="40" viewBox="0 0 40 40"><rect x="7.8" y="7.8" width="24" height="24.2" rx="4.5" fill="#fff"/><rect x="1.2" y="1.2" width="21.6" height="21.6" rx="4" fill="#17b8a6" stroke="#fff" stroke-width="2.4"/></svg><span>契約照会</span></div><div class="vd" style="left:498px"></div><div class="vd" style="left:698px"></div><div class="vd" style="left:1098px"></div><div class="vd" style="left:1438px"></div><div class="vd" style="left:1698px"></div><div class="vd" style="left:1958px"></div><div class="vd" style="left:2558px"></div><div class="c num">1531025</div><div class="c nm">田</div><svg class="ast" width="130" height="24" viewBox="0 0 130 24"><g transform="translate(10.5,12)" stroke="#000" stroke-width="3.3"><line x1="0" y1="-8.7" x2="0" y2="8.7"/><line x1="-8.7" y1="-5" x2="8.7" y2="5"/><line x1="-8.7" y1="5" x2="8.7" y2="-5"/></g><g transform="translate(43.5,12)" stroke="#000" stroke-width="3.3"><line x1="0" y1="-8.7" x2="0" y2="8.7"/><line x1="-8.7" y1="-5" x2="8.7" y2="5"/><line x1="-8.7" y1="5" x2="8.7" y2="-5"/></g><g transform="translate(76.6,12)" stroke="#000" stroke-width="3.3"><line x1="0" y1="-8.7" x2="0" y2="8.7"/><line x1="-8.7" y1="-5" x2="8.7" y2="5"/><line x1="-8.7" y1="5" x2="8.7" y2="-5"/></g><g transform="translate(109.4,12)" stroke="#000" stroke-width="3.3"><line x1="0" y1="-8.7" x2="0" y2="8.7"/><line x1="-8.7" y1="-5" x2="8.7" y2="5"/><line x1="-8.7" y1="5" x2="8.7" y2="-5"/></g></svg><div class="c bk">さわやかハイツ113</div><div class="c pr">PASS-N初保40分保1.2%フレキ3(原<i>…</i></div><div class="c ms">ミサ</div></div><div class="row" style="top:1328px;background:#f2f3f5"><div class="btn b1 t"><svg class="ic" width="40" height="40" viewBox="0 0 40 40"><rect x="7.8" y="7.8" width="24" height="24.2" rx="4.5" fill="#fff"/><rect x="1.2" y="1.2" width="21.6" height="21.6" rx="4" fill="#17b8a6" stroke="#fff" stroke-width="2.4"/></svg><span>変更</span></div><div class="btn b2 t"><svg class="ic" width="40" height="40" viewBox="0 0 40 40"><rect x="7.8" y="7.8" width="24" height="24.2" rx="4.5" fill="#fff"/><rect x="1.2" y="1.2" width="21.6" height="21.6" rx="4" fill="#17b8a6" stroke="#fff" stroke-width="2.4"/></svg><span>契約照会</span></div><div class="vd" style="left:498px"></div><div class="vd" style="left:698px"></div><div class="vd" style="left:1098px"></div><div class="vd" style="left:1438px"></div><div class="vd" style="left:1698px"></div><div class="vd" style="left:1958px"></div><div class="vd" style="left:2558px"></div><div class="c num">1530916</div><div class="c nm">田</div><svg class="ast" width="130" height="24" viewBox="0 0 130 24"><g transform="translate(10.5,12)" stroke="#000" stroke-width="3.3"><line x1="0" y1="-8.7" x2="0" y2="8.7"/><line x1="-8.7" y1="-5" x2="8.7" y2="5"/><line x1="-8.7" y1="5" x2="8.7" y2="-5"/></g><g transform="translate(43.5,12)" stroke="#000" stroke-width="3.3"><line x1="0" y1="-8.7" x2="0" y2="8.7"/><line x1="-8.7" y1="-5" x2="8.7" y2="5"/><line x1="-8.7" y1="5" x2="8.7" y2="-5"/></g><g transform="translate(76.6,12)" stroke="#000" stroke-width="3.3"><line x1="0" y1="-8.7" x2="0" y2="8.7"/><line x1="-8.7" y1="-5" x2="8.7" y2="5"/><line x1="-8.7" y1="5" x2="8.7" y2="-5"/></g><g transform="translate(109.4,12)" stroke="#000" stroke-width="3.3"><line x1="0" y1="-8.7" x2="0" y2="8.7"/><line x1="-8.7" y1="-5" x2="8.7" y2="5"/><line x1="-8.7" y1="5" x2="8.7" y2="-5"/></g></svg><div class="c bk">さわやかハイツ114</div><div class="c pr">PASS-N初保40年保10000_フレキ3(<i>…</i></div><div class="c ms">ミサ</div></div><div class="row" style="top:1424px;background:#ffffff"><div class="btn b1 t"><svg class="ic" width="40" height="40" viewBox="0 0 40 40"><rect x="7.8" y="7.8" width="24" height="24.2" rx="4.5" fill="#fff"/><rect x="1.2" y="1.2" width="21.6" height="21.6" rx="4" fill="#17b8a6" stroke="#fff" stroke-width="2.4"/></svg><span>変更</span></div><div class="btn b2 t"><svg class="ic" width="40" height="40" viewBox="0 0 40 40"><rect x="7.8" y="7.8" width="24" height="24.2" rx="4.5" fill="#fff"/><rect x="1.2" y="1.2" width="21.6" height="21.6" rx="4" fill="#17b8a6" stroke="#fff" stroke-width="2.4"/></svg><span>契約照会</span></div><div class="vd" style="left:498px"></div><div class="vd" style="left:698px"></div><div class="vd" style="left:1098px"></div><div class="vd" style="left:1438px"></div><div class="vd" style="left:1698px"></div><div class="vd" style="left:1958px"></div><div class="vd" style="left:2558px"></div><div class="c num">1530900</div><div class="c nm">田</div><svg class="ast" width="130" height="24" viewBox="0 0 130 24"><g transform="translate(10.5,12)" stroke="#000" stroke-width="3.3"><line x1="0" y1="-8.7" x2="0" y2="8.7"/><line x1="-8.7" y1="-5" x2="8.7" y2="5"/><line x1="-8.7" y1="5" x2="8.7" y2="-5"/></g><g transform="translate(43.5,12)" stroke="#000" stroke-width="3.3"><line x1="0" y1="-8.7" x2="0" y2="8.7"/><line x1="-8.7" y1="-5" x2="8.7" y2="5"/><line x1="-8.7" y1="5" x2="8.7" y2="-5"/></g><g transform="translate(76.6,12)" stroke="#000" stroke-width="3.3"><line x1="0" y1="-8.7" x2="0" y2="8.7"/><line x1="-8.7" y1="-5" x2="8.7" y2="5"/><line x1="-8.7" y1="5" x2="8.7" y2="-5"/></g><g transform="translate(109.4,12)" stroke="#000" stroke-width="3.3"><line x1="0" y1="-8.7" x2="0" y2="8.7"/><line x1="-8.7" y1="-5" x2="8.7" y2="5"/><line x1="-8.7" y1="5" x2="8.7" y2="-5"/></g></svg><div class="c bk">さわやかハイツ115</div><div class="c pr">PASS-N初保40分保1.2%フレキ3(原<i>…</i></div><div class="c ms">ミサ</div></div>
<div class="hd">
<div class="dv" style="left:498px"></div><div class="dv" style="left:698px"></div><div class="dv" style="left:1098px"></div><div class="dv" style="left:1438px"></div><div class="dv" style="left:1698px"></div><div class="dv" style="left:1958px"></div><div class="dv" style="left:2558px"></div>
<div class="h" style="left:500px;width:198px">保証番号</div>
<div class="h" style="left:700px;width:398px">賃借人名</div>
<div class="h" style="left:1100px;width:338px">物件名・号室</div>
<div class="h" style="left:1440px;width:258px">顧客管理コード</div>
<div class="h" style="left:1700px;width:258px">物件管理コード</div>
<div class="h" style="left:1960px;width:598px">商品名</div>
</div>
<div class="hl"></div><div class="vtrack"></div><div class="vthumb"></div>
<div class="htrack"></div><div class="hthumb"></div><div style="position:absolute;left:0;top:1446px;width:2636px;height:2px;background:#f4f4f4"></div>
</div>
<div class="abs" style="left:78px;top:450px;width:2px;height:1368px;background:#f1f1f2"></div><div class="abs" style="left:2716px;top:450px;width:2px;height:1368px;background:#f1f1f2"></div><div class="abs pline"></div>
<div class="abs rect"></div>
<div class="abs badge"><svg width="137" height="137" viewBox="0 0 137 137"><path d="M44 54.2 V49 A14 14 0 0 1 58 35 H82.6 A14 14 0 0 1 96.6 49 V54 A14 14 0 0 1 82.6 68 H52.7 M52.7 68 H82.6 A15 15 0 0 1 97.6 83 V88.8 A15 15 0 0 1 82.6 103.8 H57.3 A15 15 0 0 1 42.3 88.8 V83" fill="none" stroke="#fff" stroke-width="12.5" stroke-linejoin="round"/></svg></div>
</body></html>
